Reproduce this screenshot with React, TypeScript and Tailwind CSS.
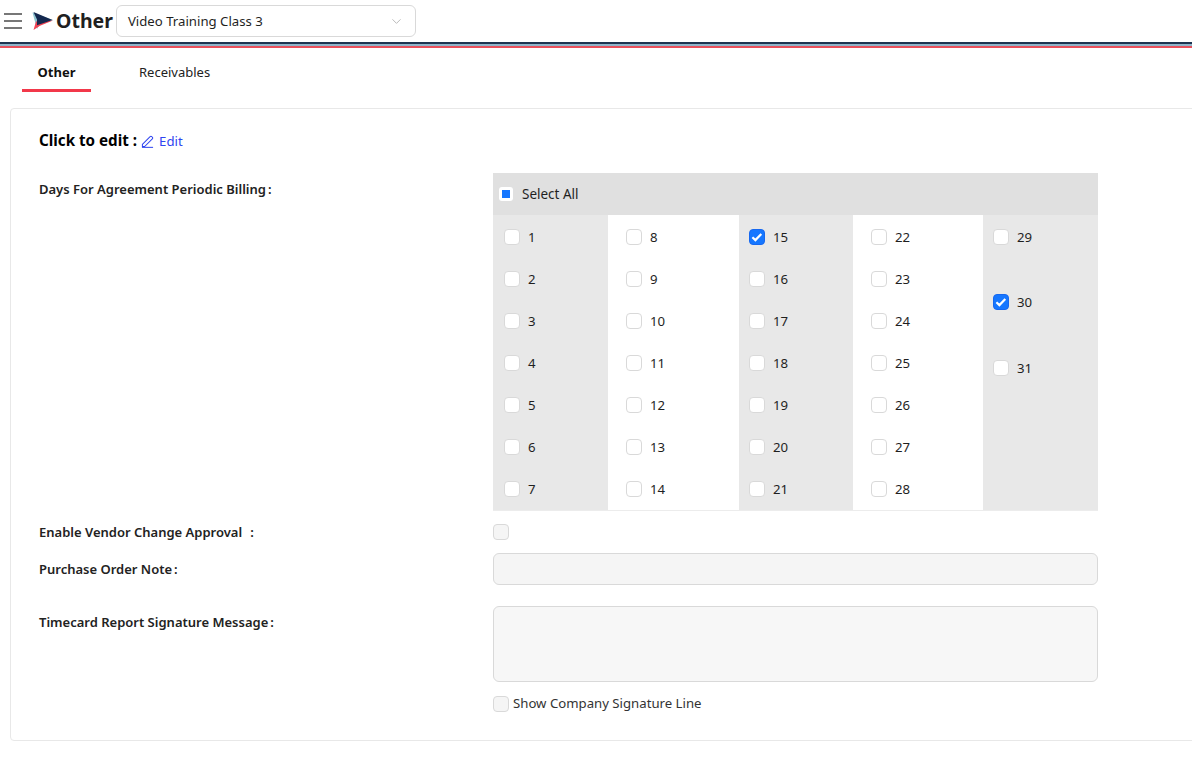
import { useState } from "react"
import { ChevronDown } from "lucide-react"

const columns = [
  { days: [1, 2, 3, 4, 5, 6, 7], width: "w-[115px]", bg: "bg-[#e8e8e8]", pad: "pl-[11px]" },
  { days: [8, 9, 10, 11, 12, 13, 14], width: "w-[131px]", bg: "bg-white", pad: "pl-[18px]" },
  { days: [15, 16, 17, 18, 19, 20, 21], width: "w-[114px]", bg: "bg-[#e8e8e8]", pad: "pl-[10px]" },
  { days: [22, 23, 24, 25, 26, 27, 28], width: "w-[130px]", bg: "bg-white", pad: "pl-[18px]" },
]

const lastColumn = [29, 30, 31]

function DayCheck({ day, checked }: { day: number; checked: boolean }) {
  return (
    <label className="flex items-center gap-[8px] text-[13.2px] leading-[20px] text-[#1f1f1f]">
      <span
        className={`flex h-4 w-4 items-center justify-center rounded-[4px] border ${
          checked ? "border-[#1668f0] bg-[#1677ff]" : "border-[#d9d9d9] bg-white"
        }`}
      >
        {checked && (
          <svg viewBox="0 0 16 16" className="h-4 w-4 shrink-0">
            <path d="M3.4 8.2l3 2.9 5.9-6" fill="none" stroke="#fff" strokeWidth="2.2" />
          </svg>
        )}
      </span>
      <span>{day}</span>
    </label>
  )
}

export default function App() {
  const [tab] = useState("Other")

  return (
    <div className="h-[757px] w-[1192px] overflow-hidden bg-white font-['Noto_Sans',sans-serif] text-[#1f1f1f]">
      {/* Header */}
      <div className="flex h-[42px] items-center pl-1">
        <div className="flex w-[18px] flex-col gap-[5px]">
          <span className="h-[2px] bg-[#777777]" />
          <span className="h-[2px] bg-[#777777]" />
          <span className="h-[2px] bg-[#777777]" />
        </div>
        <svg viewBox="0 0 21 17" className="ml-[10px] h-[18px] w-[21px]" preserveAspectRatio="none">
          <path d="M0.5 0.5L5 16L8 11L21 7.5Z" fill="#8fc4cf" />
          <path d="M1.5 17L4 9L21 8L8 13Z" fill="#ef4354" />
          <path d="M1.5 0L20.5 7.5L5 12.5L5 7Z" fill="#14284f" />
        </svg>
        <span className="ml-[3px] text-[19.5px] font-bold leading-none text-[#1f1f1f]">Other</span>
        <div className="ml-[3px] flex h-8 w-[300px] items-center justify-between rounded-[6px] border border-[#d9d9d9] px-[11px] text-[13.2px]">
          <span className="pt-[1px]">Video Training Class 3</span>
          <ChevronDown className="h-[15px] w-[15px] text-[#b5b5b5]" strokeWidth={1.5} />
        </div>
      </div>

      {/* Stripes */}
      <div className="h-[2px] bg-[#1c3350]" />
      <div className="h-[2px] bg-[#8fb4c9]" />
      <div className="h-[2px] bg-[#e8505b]" />

      {/* Tabs */}
      <div className="flex h-[44px] pl-[22px]">
        <div
          className={`flex h-[44px] w-[69px] items-center justify-center border-b-[3px] border-[#f2384a] pt-[8px] text-[13px] font-bold ${
            tab === "Other" ? "text-[#111]" : ""
          }`}
        >
          Other
        </div>
        <div className="ml-[48px] flex h-[44px] items-center pt-[5px] text-[13px] text-[#222]">Receivables</div>
      </div>

      {/* Card */}
      <div className="ml-[10px] mt-[16px] h-[633px] w-[1200px] rounded-[4px] border border-[#e8e8e8] pl-[28px] pt-[20px]">
        <div className="flex h-[22px] items-center">
          <span className="text-[15.2px] font-bold text-black">Click to edit :</span>
          <svg viewBox="0 0 14 14" className="ml-[4px] mt-[2px] h-[13px] w-[13px]" fill="none" stroke="#2f45f0" strokeWidth="1.1">
            <path d="M1.5 10.2L9.8 1.8a1.2 1.2 0 011.8 0l.6.6a1.2 1.2 0 010 1.8L3.9 12.5H1.5z" />
            <path d="M1 13.3h12" />
          </svg>
          <span className="ml-[5px] mt-[3px] text-[13.2px] text-[#2f45f0]">Edit</span>
        </div>

        {/* Billing days */}
        <div className="mt-[22px] flex">
          <div className="w-[454px] pt-[5px] text-[13px] font-semibold leading-[22px] text-[#222]">
            Days For Agreement Periodic Billing<span className="ml-[2px]">:</span>
          </div>
          <div className="w-[605px]">
            <div className="flex h-[42px] items-center gap-[9px] bg-[#e0e0e0] pl-[6px] text-[13.5px]">
              <span className="flex h-[14px] w-[14px] items-center justify-center rounded-[3px] bg-white">
                <span className="h-2 w-2 bg-[#1677ff]" />
              </span>
              Select All
            </div>
            <div className="flex h-[296px] border-b border-[#ececec]">
              {columns.map((col) => (
                <div key={col.days[0]} className={`${col.width} ${col.bg} ${col.pad} flex flex-col gap-[22px] pt-[12px]`}>
                  {col.days.map((d) => (
                    <DayCheck key={d} day={d} checked={d === 15} />
                  ))}
                </div>
              ))}
              <div className="flex w-[115px] flex-col gap-[45.4px] bg-[#e8e8e8] pl-[10px] pt-[12px]">
                {lastColumn.map((d) => (
                  <DayCheck key={d} day={d} checked={d === 30} />
                ))}
              </div>
            </div>
          </div>
        </div>

        {/* Vendor approval */}
        <div className="mt-[5px] flex h-[32px] items-center">
          <div className="w-[454px] pt-[1px] text-[13px] font-semibold text-[#222]">
            Enable Vendor Change Approval<span className="ml-[8px]">:</span>
          </div>
          <span className="h-4 w-4 rounded-[4px] border border-[#d9d9d9] bg-[#f5f5f5]" />
        </div>

        {/* Purchase order note */}
        <div className="mt-[5px] flex">
          <div className="w-[454px] pt-[5px] text-[13px] font-semibold leading-[22px] text-[#222]">
            Purchase Order Note<span className="ml-[2px]">:</span>
          </div>
          <div className="h-8 w-[605px] rounded-[6px] border border-[#d9d9d9] bg-[#f5f5f5]" />
        </div>

        {/* Signature message */}
        <div className="mt-[21px] flex">
          <div className="w-[454px] pt-[5px] text-[13px] font-semibold leading-[22px] text-[#222]">
            Timecard Report Signature Message<span className="ml-[2px]">:</span>
          </div>
          <div>
            <div className="h-[76px] w-[605px] rounded-[6px] border border-[#d9d9d9] bg-[#f7f7f7]" />
            <div className="mt-[12px] flex items-center gap-[4px] text-[13.2px] text-[#333]">
              <span className="h-4 w-4 rounded-[4px] border border-[#d9d9d9] bg-[#f5f5f5]" />
              Show Company Signature Line
            </div>
          </div>
        </div>
      </div>
    </div>
  )
}
